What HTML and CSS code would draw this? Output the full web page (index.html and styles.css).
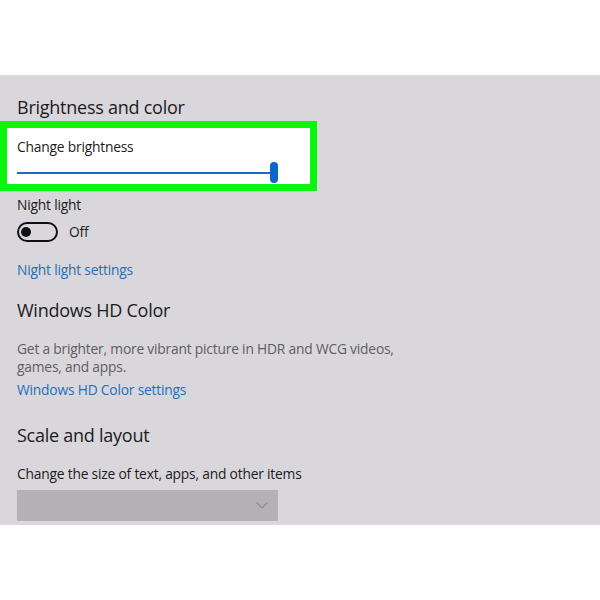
FILE: index.html
```html
<!DOCTYPE html>
<html lang="en">
<head>
<meta charset="utf-8">
<title>Display settings</title>
<link rel="stylesheet" href="styles.css">
</head>
<body>
<main class="panel">
  <h2 class="section-title first">Brightness and color</h2>
  <div class="highlight">
    <div class="label">Change brightness</div>
    <div class="slider">
      <div class="track"></div>
      <div class="thumb"></div>
    </div>
  </div>
  <div class="label night">Night light</div>
  <div class="toggle-row">
    <div class="toggle"><div class="knob"></div></div>
    <span class="toggle-text">Off</span>
  </div>
  <a class="link night-link" href="#">Night light settings</a>
  <h2 class="section-title hd">Windows HD Color</h2>
  <p class="desc">Get a brighter, more vibrant picture in HDR and WCG videos, games, and apps.</p>
  <a class="link hd-link" href="#">Windows HD Color settings</a>
  <h2 class="section-title scale">Scale and layout</h2>
  <div class="label size">Change the size of text, apps, and other items</div>
  <div class="dropdown">
    <svg class="chevron" width="12" height="7" viewBox="0 0 12 7"><polyline points="0.5,0.5 6,6 11.5,0.5" fill="none" stroke="#8b898d" stroke-width="1.2"/></svg>
  </div>
</main>
</body>
</html>
```
FILE: styles.css
```css
html, body {
  margin: 0;
  padding: 0;
  background: #ffffff;
}
body {
  width: 600px;
  height: 600px;
  font-family: "Open Sans", "Noto Sans", sans-serif;
  color: #1b1b1b;
  padding-top: 75px;
  box-sizing: border-box;
}
.panel {
  background: #d9d7db;
  height: 450px;
  box-sizing: border-box;
  padding: 20px 0 0 17px;
  display: flex;
  flex-direction: column;
  align-items: flex-start;
}
.section-title {
  margin: 0;
  font-weight: 400;
  font-size: 18px;
  line-height: 24px;
  letter-spacing: -0.25px;
}
.label {
  font-size: 13.8px;
  line-height: 20px;
  letter-spacing: -0.2px;
}
.highlight {
  margin: 2px 0 0 -17px;
  width: 317px;
  height: 70px;
  box-sizing: border-box;
  border: 7px solid #0cf50c;
  background: #ffffff;
  padding: 9px 0 0 10px;
  display: flex;
  flex-direction: column;
}
.slider {
  margin-top: 5px;
  display: flex;
  align-items: center;
  height: 21px;
}
.track {
  width: 253px;
  height: 2px;
  background: #1a6cc2;
}
.thumb {
  width: 8px;
  height: 21px;
  border-radius: 4px;
  background: #0a66c9;
}
.night {
  margin-top: 4px;
}
.toggle-row {
  margin-top: 7px;
  display: flex;
  align-items: center;
  height: 20px;
}
.toggle {
  width: 41px;
  height: 20px;
  box-sizing: border-box;
  border: 2px solid #111111;
  border-radius: 10px;
  padding-left: 2px;
  display: flex;
  align-items: center;
}
.knob {
  width: 10px;
  height: 10px;
  border-radius: 50%;
  background: #111111;
}
.toggle-text {
  margin-left: 11px;
  font-size: 13.8px;
  line-height: 20px;
  letter-spacing: -0.2px;
}
.link {
  display: block;
  color: #1d6fbb;
  text-decoration: none;
  font-size: 13.8px;
  line-height: 20px;
  letter-spacing: -0.2px;
}
.night-link {
  margin-top: 18px;
}
.hd {
  margin-top: 18px;
}
.desc {
  margin: 18px 0 0 0;
  max-width: 395px;
  color: #5e5d61;
  font-size: 13.8px;
  line-height: 18px;
  letter-spacing: -0.2px;
}
.hd-link {
  margin-top: 4px;
}
.scale {
  margin-top: 23px;
}
.size {
  margin-top: 17px;
}
.dropdown {
  margin-top: 6px;
  width: 261px;
  height: 31px;
  background: #b4b2b6;
  display: flex;
  align-items: center;
  justify-content: flex-end;
  padding-right: 10px;
  box-sizing: border-box;
}
```
